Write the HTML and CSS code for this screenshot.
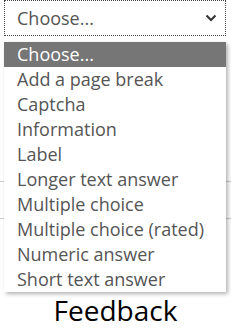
FILE: index.html
```html
<!DOCTYPE html>
<html lang="en">
<head>
    <meta charset="UTF-8">
    <meta name="viewport" content="width=device-width, initial-scale=1.0">
    <title>Add question</title>
    <link rel="stylesheet" href="styles.css">
</head>
<body>
    <div class="page">
        <div class="select">
            <span class="select-value">Choose...</span>
            <svg class="chevron" width="12" height="8" viewBox="0 0 12 8">
                <path d="M1.5 1.5 L6 6 L10.5 1.5" fill="none" stroke="#333" stroke-width="2"/>
            </svg>
        </div>

        <div class="behind">
            <div class="row"></div>
            <div class="row"></div>
        </div>

        <h2 class="heading">Feedback</h2>

        <ul class="dropdown">
            <li class="active">Choose...</li>
            <li>Add a page break</li>
            <li>Captcha</li>
            <li>Information</li>
            <li>Label</li>
            <li>Longer text answer</li>
            <li>Multiple choice</li>
            <li>Multiple choice (rated)</li>
            <li>Numeric answer</li>
            <li>Short text answer</li>
        </ul>
    </div>
</body>
</html>
```

FILE: styles.css
```css
body { margin: 0; background: #fff; font-family: 'Open Sans', 'Noto Sans', sans-serif; color: #555; }
.page { position: relative; height: 330px; overflow: hidden; }
.select { box-sizing: border-box; margin: 0 5px 0 4px; height: 36px; border: 1px dotted #444; display: flex; align-items: center; justify-content: space-between; padding: 0 8px 0 12px; font-size: 18px; }
.chevron { display: block; }
.behind { margin-top: 145px; }
.row { height: 36px; border-top: 1px solid #ccc; }
.heading { margin: 38px 0 0; text-align: center; font-size: 28px; font-weight: normal; color: #000; line-height: 34px; }
.dropdown { position: absolute; top: 42px; left: 4px; width: 222px; margin: 0; padding: 0; list-style: none; background: #fff; box-shadow: 2px 2px 4px rgba(0,0,0,0.3); font-size: 18px; }
.dropdown li { height: 25px; line-height: 25px; padding-left: 13px; white-space: nowrap; }
.dropdown li.active { background: #767676; color: #fff; }
```
